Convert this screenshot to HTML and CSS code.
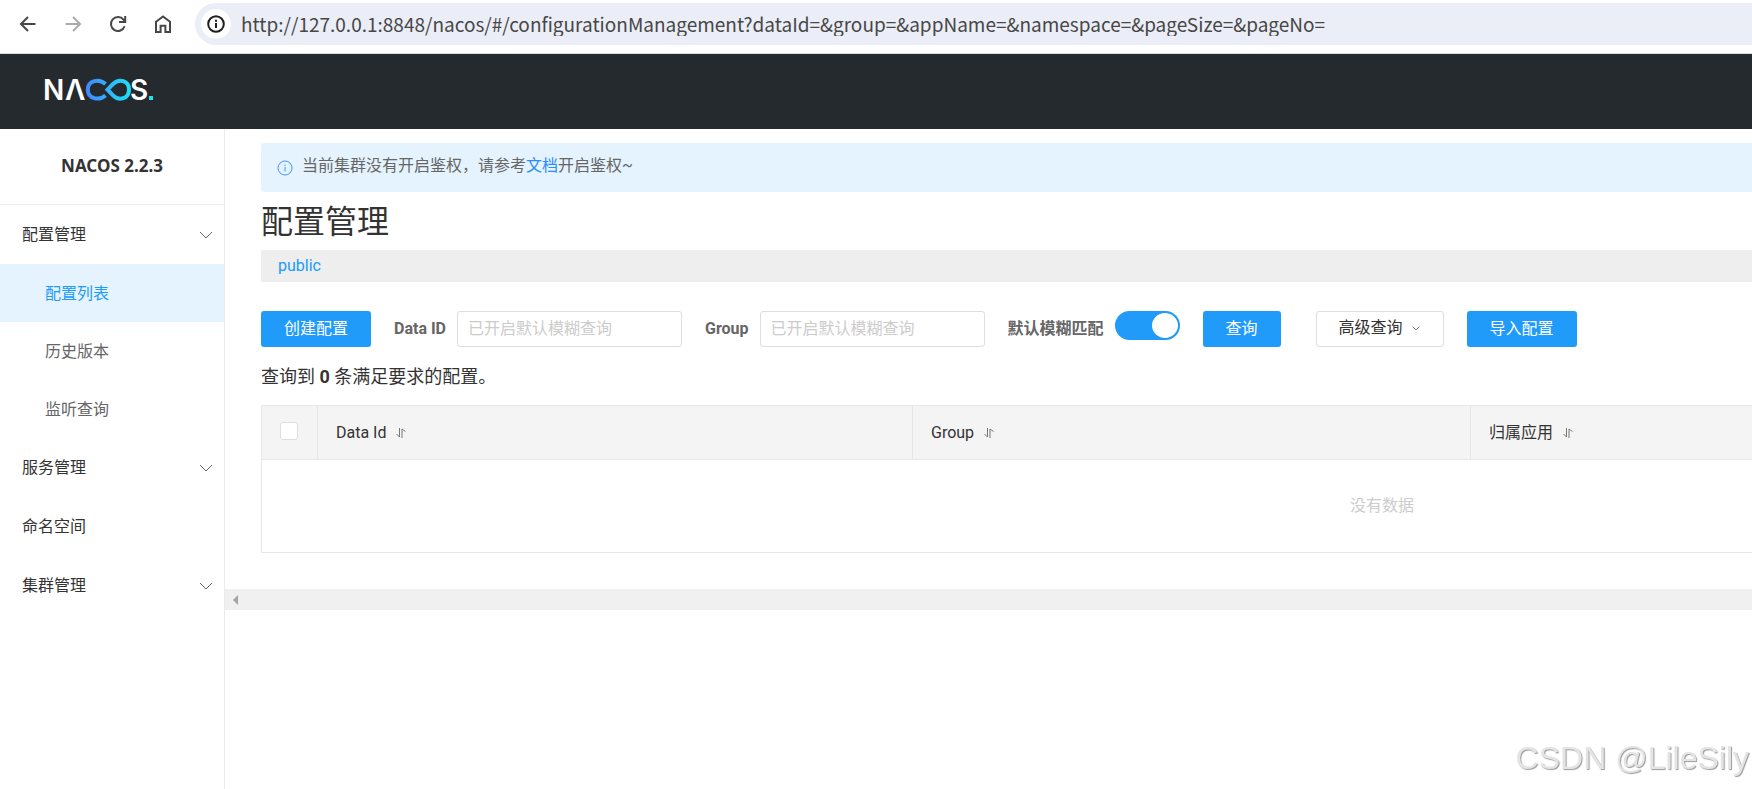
FILE: index.html
```
<!DOCTYPE html>
<html lang="zh-CN">
<head>
<meta charset="utf-8">
<title>NACOS</title>
<link rel="stylesheet" href="styles.css">
</head>
<body>
<div class="browser-bar">
  <button class="nav-btn" type="button" aria-label="Back"><svg width="18" height="18" viewBox="0 0 18 18"><path d="M16.500 9H2.500M9 2L2 9l7 7"/></svg></button>
  <button class="nav-btn nav-btn-off" type="button" aria-label="Forward"><svg width="18" height="18" viewBox="0 0 18 18"><path d="M1.500 9h14M9 2l7 7-7 7"/></svg></button>
  <button class="nav-btn" type="button" aria-label="Reload"><svg width="18" height="18" viewBox="0 0 18 18"><path d="M15.600 11.200A7 7 0 1 1 14.500 4.700L16 6.500M16.200 1v6H10"/></svg></button>
  <button class="nav-btn" type="button" aria-label="Home"><svg width="18" height="18" viewBox="0 0 18 18"><path d="M2 6.800L9 1.500l7 5.300V17h-4.600v-6.200H6.600V17H2z"/></svg></button>
  <div class="address">
    <span class="site-info"><svg width="18" height="18" viewBox="0 0 18 18"><circle cx="9" cy="9" r="7.800"/><path d="M9 8v5M9 4.800v2"/></svg></span>
    <input class="url" type="text" aria-label="Address" value="http://127.0.0.1:8848/nacos/#/configurationManagement?dataId=&amp;group=&amp;appName=&amp;namespace=&amp;pageSize=&amp;pageNo=">
  </div>
</div>

<header class="site-header">
  <svg class="logo" width="118" height="42" viewBox="-4 -4 118 42" role="img" aria-label="NACOS.">
    <defs>
      <linearGradient id="loop" gradientUnits="userSpaceOnUse" x1="42" y1="0" x2="86" y2="0">
        <stop offset="0" stop-color="#4287ff"/><stop offset="1" stop-color="#1de2f5"/>
      </linearGradient>
    </defs>
    <text class="logo-text" x="-2" y="25">N</text>
    <text class="logo-text" x="20" y="25">Λ</text>
    <path class="logo-loop" d="M60.500 9C54 3 42.800 5.600 42.800 14.700S54 26 60.500 20.400"/>
    <path class="logo-loop" d="M62.500 14.700L68 9C74 3 84 5.600 84 14.700S74 26.400 68 20.400Z"/>
    <text class="logo-text" x="85" y="25">S</text>
    <rect x="104" y="21" width="4" height="4" fill="#1de2f5"/>
  </svg>
</header>

<div class="layout">
  <aside class="sidebar">
    <h1 class="version">NACOS 2.2.3</h1>
    <nav>
      <a class="item" href="#config">配置管理<svg class="caret" width="14" height="8" viewBox="0 0 14 8"><path d="M1 1l6 6 6-6"/></svg></a>
      <a class="item sub active" href="#list">配置列表</a>
      <a class="item sub" href="#history">历史版本</a>
      <a class="item sub" href="#listen">监听查询</a>
      <a class="item" href="#service">服务管理<svg class="caret" width="14" height="8" viewBox="0 0 14 8"><path d="M1 1l6 6 6-6"/></svg></a>
      <a class="item" href="#namespace">命名空间</a>
      <a class="item" href="#cluster">集群管理<svg class="caret" width="14" height="8" viewBox="0 0 14 8"><path d="M1 1l6 6 6-6"/></svg></a>
    </nav>
  </aside>

  <main class="main">
    <div class="content">
      <div class="notice">
        <svg class="notice-icon" width="16" height="16" viewBox="0 0 16 16"><circle cx="8" cy="8" r="7"/><path d="M8 7v4.500M8 4.500V6"/></svg>
        <p>当前集群没有开启鉴权，请参考<a href="#doc">文档</a>开启鉴权~</p>
      </div>
      <h2 class="title">配置管理</h2>
      <div class="namespaces"><a href="#public">public</a></div>

      <form class="toolbar">
        <button class="btn primary" type="button">创建配置</button>
        <div class="field"><label for="dataId">Data ID</label><input class="text" id="dataId" type="text" placeholder="已开启默认模糊查询"></div>
        <div class="field"><label for="group">Group</label><input class="text" id="group" type="text" placeholder="已开启默认模糊查询"></div>
        <div class="field"><label for="fuzzy">默认模糊匹配</label><input class="switch" id="fuzzy" type="checkbox" role="switch" checked></div>
        <button class="btn primary" type="button">查询</button>
        <button class="btn plain" type="button">高级查询<svg width="8" height="5" viewBox="0 0 8 5"><path d="M.500.500L4 4 7.500.500"/></svg></button>
        <button class="btn primary" type="button">导入配置</button>
      </form>

      <p class="count">查询到 <strong>0</strong> 条满足要求的配置。</p>

      <table class="grid">
        <colgroup><col class="c-check"><col class="c-id"><col class="c-group"><col></colgroup>
        <thead>
          <tr>
            <th class="check"><input type="checkbox" aria-label="全选"></th>
            <th>Data Id<svg class="sort" width="10" height="10" viewBox="0 0 10 10"><path d="M3.500 0v9L.500 6M6 10V1l3.500 2.500"/></svg></th>
            <th>Group<svg class="sort" width="10" height="10" viewBox="0 0 10 10"><path d="M3.500 0v9L.500 6M6 10V1l3.500 2.500"/></svg></th>
            <th>归属应用<svg class="sort" width="10" height="10" viewBox="0 0 10 10"><path d="M3.500 0v9L.500 6M6 10V1l3.500 2.500"/></svg></th>
          </tr>
        </thead>
        <tbody><tr><td class="empty" colspan="4">没有数据</td></tr></tbody>
      </table>
    </div>
    <div class="scroll-track"><svg width="5" height="10" viewBox="0 0 5 10"><path d="M5 0v10L0 5z"/></svg></div>
  </main>
</div>
<div class="watermark">CSDN @LileSily</div>
</body>
</html>
```
FILE: styles.css
```
* { box-sizing: border-box; }
body {
  margin: 0;
  height: 100vh;
  display: flex;
  flex-direction: column;
  overflow: hidden;
  background: #fff;
  color: #333;
  font: 16px/24px Roboto, "Noto Sans CJK SC", sans-serif;
}
h1, h2, p { margin: 0; }
a { text-decoration: none; }
button, input { font: inherit; }
svg { fill: none; flex: none; }

.browser-bar {
  height: 54px;
  display: flex;
  align-items: center;
  padding: 0 0 6px 19px;
  border-bottom: 1px solid #dadce0;
}
.nav-btn {
  display: flex;
  width: 18px;
  padding: 0;
  margin-right: 27px;
  border: 0;
  background: none;
  stroke: #474747;
  stroke-width: 2;
}
.nav-btn-off { stroke: #ababab; }
.address {
  flex: 1;
  display: flex;
  align-items: center;
  height: 42px;
  margin-left: -4px;
  padding-left: 6px;
  border-radius: 21px 0 0 21px;
  background: #ebeef7;
}
.site-info {
  display: grid;
  place-items: center;
  width: 30px;
  height: 30px;
  border-radius: 50%;
  background: #fff;
  stroke: #1f1f1f;
  stroke-width: 2;
}
.url {
  flex: 1;
  padding: 0 0 0 10px;
  border: 0;
  outline: 0;
  background: none;
  color: #474747;
  font: 19px/24px "Noto Sans CJK SC", sans-serif;
}

.site-header {
  height: 75px;
  display: flex;
  align-items: center;
  padding-left: 41px;
  background: #252a2f;
}
.logo-text { fill: #fff; font: 600 28px Inter, sans-serif; }
.logo-loop { stroke: url(#loop); stroke-width: 4; }

.layout { flex: 1; display: flex; }
.sidebar {
  flex: none;
  width: 225px;
  border-right: 1px solid #ebebeb;
}
.version {
  height: 76px;
  border-bottom: 1px solid #ebebeb;
  text-align: center;
  font: 700 17px/74px "Noto Sans", sans-serif;
}
.item {
  display: flex;
  align-items: center;
  justify-content: space-between;
  height: 59px;
  padding: 1px 11px 0 22px;
  color: #333;
}
.sub { height: 58px; padding: 2px 11px 0 45px; color: #666; }
.active { background: #e4f3fe; color: #209bfa; }
.caret { stroke: #666; }

.main { flex: 1; min-width: 0; overflow: hidden; }
.content { min-width: 2278px; padding: 14px 0 36px 36px; }
.notice {
  display: flex;
  gap: 9px;
  height: 49px;
  padding: 11px 16px;
  border-radius: 3px;
  background: #e4f3fe;
  color: #666;
}
.notice-icon { margin-top: 6px; stroke: #4494f9; }
.notice a { color: #298dff; }
.title { padding: 6px 0 4px; font-size: 32px; font-weight: 400; line-height: 48px; }
.namespaces { height: 32px; padding: 4px 17px; background: #eee; }
.namespaces a { color: #209bfa; }

.toolbar { display: flex; gap: 23px; margin-top: 29px; height: 36px; }
.btn { height: 36px; padding: 0 23px; border: 0; border-radius: 3px; white-space: nowrap; }
.primary { background: #209bfa; color: #fff; }
.plain {
  display: flex;
  align-items: center;
  gap: 9px;
  margin-left: 12px;
  padding: 0 23px 2px 22px;
  border: 1px solid #dcdee3;
  background: #fff;
  color: #333;
}
.plain svg { stroke: #888; }
.field { display: flex; gap: 11px; }
.field label { color: #666; font-weight: 700; line-height: 36px; }
.text {
  width: 225px;
  height: 36px;
  padding: 0 10px 2px;
  border: 1px solid #dcdee3;
  border-radius: 3px;
  outline: 0;
}
.text::placeholder { color: #ccc; }
.switch {
  appearance: none;
  display: flex;
  justify-content: flex-end;
  width: 65px;
  height: 29px;
  margin: 0;
  padding: 2px;
  border-radius: 15px;
  background: #209bfa;
}
.switch::before { content: ""; width: 26px; height: 25px; border-radius: 50%; background: #fff; }

.count { margin-top: 16px; font-size: 18px; line-height: 27px; }
.grid {
  width: 100%;
  margin-top: 15px;
  table-layout: fixed;
  border-collapse: collapse;
  border: 1px solid #e6e7eb;
}
.c-check { width: 56px; }
.c-id { width: 595px; }
.c-group { width: 558px; }
.grid th {
  height: 54px;
  padding: 0 18px;
  border: 1px solid #e6e7eb;
  background: #f4f4f4;
  font-weight: 400;
  text-align: left;
}
.grid .check { padding-bottom: 3px; }
.grid .check input {
  appearance: none;
  display: block;
  width: 18px;
  height: 18px;
  margin: 0;
  border: 1px solid #dcdee3;
  border-radius: 3px;
  background: #fff;
}
.sort { margin-left: 10px; stroke: #777; }
.empty { height: 93px; padding: 0; color: #ccc; text-align: center; }
.scroll-track { display: flex; align-items: center; height: 21px; padding-left: 8px; background: #f0f0f0; }
.scroll-track path { fill: #a3a3a3; }

.watermark {
  position: fixed;
  right: 3px;
  bottom: 11px;
  color: #e4e4e4;
  font: 32px/40px "Liberation Sans", sans-serif;
  text-shadow: 1px 1px 1px #999;
}
```
